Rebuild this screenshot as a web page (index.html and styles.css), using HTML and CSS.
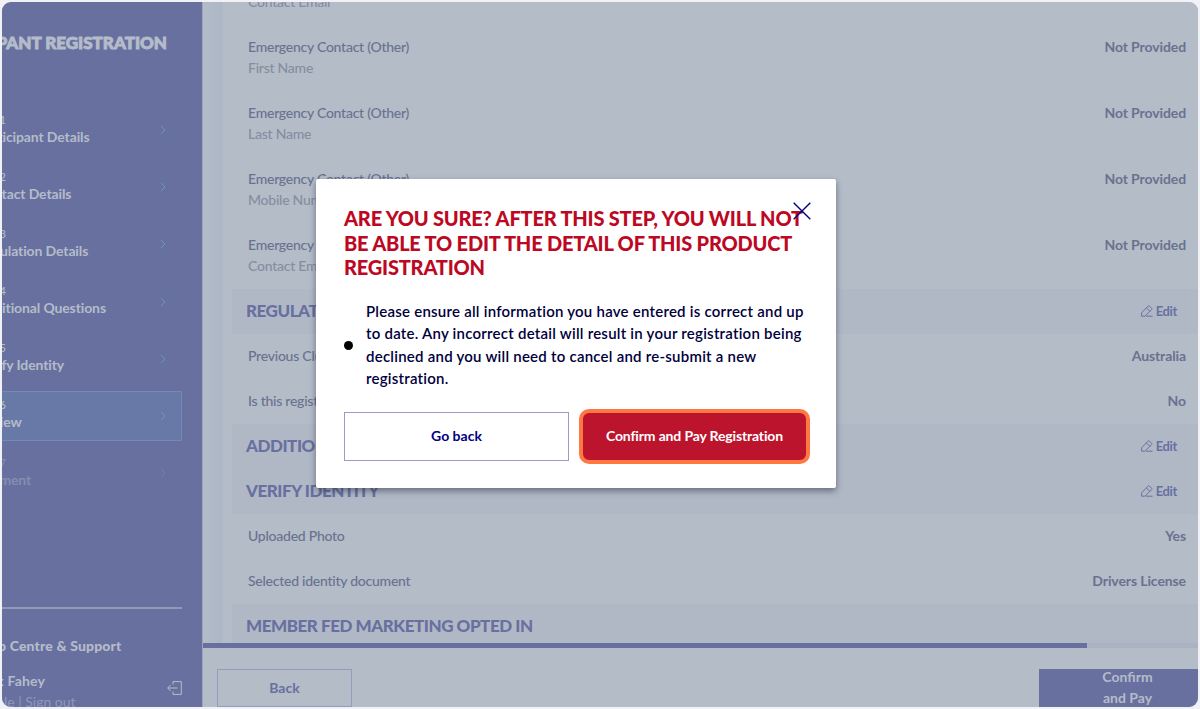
FILE: index.html
```html
<!DOCTYPE html>
<html lang="en">
<head>
  <meta charset="UTF-8" />
  <meta name="viewport" content="width=device-width, initial-scale=1.0"/>
  <title>Participant Registration</title>
  <link rel="stylesheet" href="styles.css">
</head>
<body>
  <svg class="defs" width="0" height="0">
    <symbol id="chevron" viewBox="0 0 6 10"><path d="M1 1l4 4-4 4"/></symbol>
    <symbol id="pencil" viewBox="0 0 12 12"><path d="M.6 11.2V7.8L7 1.2c.5-.5 1-.5 1.500 0l2 2c.5.5.5 1 0 1.500L4 11.200H.6M5.400 2.900l3.500 3.500M5 11.200h6.500"/></symbol>
  </svg>
  <div class="app">
    <aside class="sidebar">
      <h1>PARTICIPANT REGISTRATION</h1>
      <nav class="steps">
        <a class="step"><div><small>Step 1</small><b>Participant Details</b></div><svg><use href="#chevron"/></svg></a>
        <a class="step"><div><small>Step 2</small><b>Contact Details</b></div><svg><use href="#chevron"/></svg></a>
        <a class="step"><div><small>Step 3</small><b>Regulation Details</b></div><svg><use href="#chevron"/></svg></a>
        <a class="step"><div><small>Step 4</small><b>Additional Questions</b></div><svg><use href="#chevron"/></svg></a>
        <a class="step"><div><small>Step 5</small><b>Verify Identity</b></div><svg><use href="#chevron"/></svg></a>
        <a class="step active"><div><small>Step 6</small><b>Review</b></div><svg><use href="#chevron"/></svg></a>
        <a class="step disabled"><div><small>Step 7</small><b>Payment</b></div><svg><use href="#chevron"/></svg></a>
      </nav>
      <div class="account">
        <div class="help">Help Centre &amp; Support</div>
        <div class="user">
          <div>
            <div class="name">Jack Fahey</div>
            <div class="links">Profile | Sign out</div>
          </div>
          <svg class="signout" viewBox="0 0 15 14"><path d="M6 3.500V.6h8.300v12.800H6v-2.900M10.500 7H.8M3.600 4L.7 7l2.900 3"/></svg>
        </div>
      </div>
    </aside>

    <main class="main">
      <div class="review">
        <div class="row first"><div>Emergency Contact (Other)<span>Contact Email</span></div><b>Not Provided</b></div>
        <div class="row"><div>Emergency Contact (Other)<span>First Name</span></div><b>Not Provided</b></div>
        <div class="row"><div>Emergency Contact (Other)<span>Last Name</span></div><b>Not Provided</b></div>
        <div class="row"><div>Emergency Contact (Other)<span>Mobile Number</span></div><b>Not Provided</b></div>
        <div class="row"><div>Emergency Contact (Other)<span>Contact Email</span></div><b>Not Provided</b></div>
        <div class="section"><h3>REGULATION DETAILS</h3><a><svg><use href="#pencil"/></svg>Edit</a></div>
        <div class="row"><div>Previous Club Country</div><b>Australia</b></div>
        <div class="row"><div>Is this registration a transfer?</div><b>No</b></div>
        <div class="section"><h3>ADDITIONAL QUESTIONS</h3><a><svg><use href="#pencil"/></svg>Edit</a></div>
        <div class="section"><h3>VERIFY IDENTITY</h3><a><svg><use href="#pencil"/></svg>Edit</a></div>
        <div class="row"><div>Uploaded Photo</div><b>Yes</b></div>
        <div class="row"><div>Selected identity document</div><b>Drivers License</b></div>
        <div class="section"><h3>MEMBER FED MARKETING OPTED IN</h3></div>
      </div>
      <div class="progress"><div class="bar"></div></div>
      <footer class="footer">
        <button class="back">Back</button>
        <button class="confirm">Confirm<br>and Pay</button>
      </footer>
    </main>

    <div class="modal">
      <svg class="close" viewBox="0 0 18 18"><path d="M.7.7l16.600 16.600M17.300.7L.7 17.300"/></svg>
      <h2>ARE YOU SURE? AFTER THIS STEP, YOU WILL NOT<br>BE ABLE TO EDIT THE DETAIL OF THIS PRODUCT<br>REGISTRATION</h2>
      <div class="notice">
        <i class="dot"></i>
        <p>Please ensure all information you have entered is correct and up<br>to date. Any incorrect detail will result in your registration being<br>declined and you will need to cancel and re-submit a new<br>registration.</p>
      </div>
      <div class="actions">
        <button class="go-back">Go back</button>
        <button class="pay">Confirm and Pay Registration</button>
      </div>
    </div>
  </div>
</body>
</html>
```
FILE: styles.css
```css
:root {
  --purple: #6870a0;
  --bg: #b4bcc8;
  --section: #b0b8c6;
  --text: #69728f;
  --muted: #858e9f;
  --light: #b4bcc9;
  --navy: #00003c;
}

* {
  box-sizing: border-box;
}

body {
  margin: 0;
  height: 709px;
  padding: 2px;
  overflow: hidden;
  background: #f1f1f8;
  font-family: Lato, sans-serif;
  font-size: 14px;
  line-height: 21px;
}

button {
  font-family: inherit;
  padding: 0;
}

svg {
  fill: none;
  stroke: currentColor;
}

.defs {
  position: absolute;
}

.app {
  position: relative;
  display: flex;
  height: 705px;
  border-radius: 9px;
  overflow: hidden;
  background: var(--bg);
}

/* sidebar */
.sidebar {
  display: flex;
  flex-direction: column;
  flex: none;
  width: 242px;
  margin-left: -42px;
  padding-right: 20px;
  background: var(--purple);
  color: var(--light);
  white-space: nowrap;
}

.sidebar h1 {
  display: flex;
  justify-content: flex-end;
  margin: 30px 15px 51px 0;
  font-size: 17px;
  font-weight: 900;
  line-height: 22px;
  -webkit-text-stroke: 0.9px currentColor;
}

.step {
  display: flex;
  align-items: center;
  justify-content: space-between;
  height: 50px;
  margin-bottom: 7.200px;
  padding: 0 15px 0 16px;
  border: 1px solid transparent;
}

.step small {
  display: block;
  margin-left: -2px;
  font-size: 11px;
  font-weight: 500;
  line-height: 13px;
}

.step b {
  display: block;
  line-height: 21px;
  font-size: 14px;
  letter-spacing: -0.12px;
}

.step > div {
  margin-top: -1px;
}

.step svg {
  width: 6px;
  height: 10px;
  color: #6b94bf;
}

.step.active {
  background: #6878a7;
  border-color: #7488bd;
}

.step.disabled b,
.step.disabled small {
  color: #858db0;
}

.step.disabled svg {
  opacity: 0.5;
}

.account {
  height: 100px;
  margin-top: auto;
  border-top: 2px solid #9299b8;
}

.help {
  margin-top: 26px;
  padding-left: 16px;
  font-weight: 900;
  letter-spacing: 0.15px;
}

.user {
  display: flex;
  align-items: center;
  justify-content: space-between;
  margin-top: 14px;
  padding-left: 16px;
}

.name {
  font-weight: bold;
  letter-spacing: 0.2px;
}

.links {
  margin-left: -1px;
  color: #9097b6;
}

.signout {
  width: 15px;
  height: 14px;
  margin: -6px 0 0 0;
}

/* review list */
.main {
  display: flex;
  flex-direction: column;
  flex: 1;
  border-left: 1px solid #9da5bd;
}

.review {
  height: 641px;
  overflow: hidden;
  padding-left: 29px;
  background: linear-gradient(90deg, #b3bbc8, #adb7c6 19px, var(--bg) 20px);
  color: var(--text);
}

.row {
  display: flex;
  justify-content: space-between;
  padding: 11px 12px 13px 16px;
  font-weight: 500;
  letter-spacing: -0.25px;
}

.row.first {
  margin-top: -43px;
}

.row b {
  letter-spacing: -0.1px;
}

.row span {
  display: block;
  color: var(--muted);
}

.section {
  display: flex;
  align-items: center;
  justify-content: space-between;
  height: 45px;
  padding: 0 20px 2px 14px;
  background: var(--section);
  color: var(--purple);
}

.section h3 {
  margin: 0;
  font-size: 17px;
  font-weight: 900;
  letter-spacing: -0.46px;
}

.section a {
  display: flex;
  align-items: center;
  gap: 3px;
  padding: 1px 1px 0 0;
  font-size: 13px;
  font-weight: bold;
  letter-spacing: -0.35px;
}

.section svg {
  width: 12px;
  height: 12px;
}

.progress {
  height: 5px;
  flex: none;
  background: #abb3c2;
}

.bar {
  width: 884px;
  height: 5px;
  background: var(--purple);
}

.footer {
  display: flex;
  justify-content: space-between;
  padding: 21px 0 0 14px;
}

.footer button {
  height: 38px;
  font-size: 14px;
  font-weight: bold;
  line-height: 21px;
}

.footer .back {
  width: 135px;
  padding-bottom: 2px;
  border: 1px solid #939cbb;
  background: none;
  color: var(--purple);
}

.footer .confirm {
  display: flex;
  align-items: center;
  justify-content: center;
  width: 159px;
  padding: 0 0 2px 18px;
  border: 0;
  background: var(--purple);
  color: var(--light);
}

/* confirmation dialog */
.modal {
  position: absolute;
  left: 314px;
  top: 177px;
  width: 520px;
  height: 309px;
  padding: 27px 28px;
  border-radius: 2px;
  background: #fff;
  box-shadow: 0 3px 6px rgba(30, 40, 60, 0.5);
  color: var(--navy);
  white-space: nowrap;
}

.close {
  position: absolute;
  left: 477px;
  top: 23px;
  width: 18px;
  height: 18px;
  color: #000080;
  stroke-width: 1.400;
}

.modal h2 {
  margin: 0;
  color: #bd0823;
  font-size: 20px;
  font-weight: 900;
  line-height: 24.500px;
  letter-spacing: -0.2px;
}

.notice {
  display: flex;
  align-items: center;
  gap: 13px;
  margin-top: 20px;
}

.dot {
  width: 9px;
  height: 9px;
  margin-top: 2px;
  border-radius: 50%;
  background: #000;
}

.notice p {
  margin: 0;
  font-size: 15px;
  font-weight: 600;
  line-height: 22.500px;
  letter-spacing: 0.24px;
}

.actions {
  display: flex;
  gap: 10px;
  margin-top: 22px;
}

.actions button {
  flex: none;
  font-size: 14px;
  font-weight: bold;
}

.actions .go-back {
  width: 225px;
  height: 49px;
  padding-bottom: 2px;
  border: 1px solid #9a9acb;
  background: #fff;
  color: #000080;
}

.actions .pay {
  width: 231px;
  height: 55px;
  margin-top: -3px;
  padding-bottom: 2px;
  border: 4px solid #ff7841;
  border-radius: 10px;
  background: #bd142d;
  color: #fff;
  letter-spacing: -0.15px;
}
```
